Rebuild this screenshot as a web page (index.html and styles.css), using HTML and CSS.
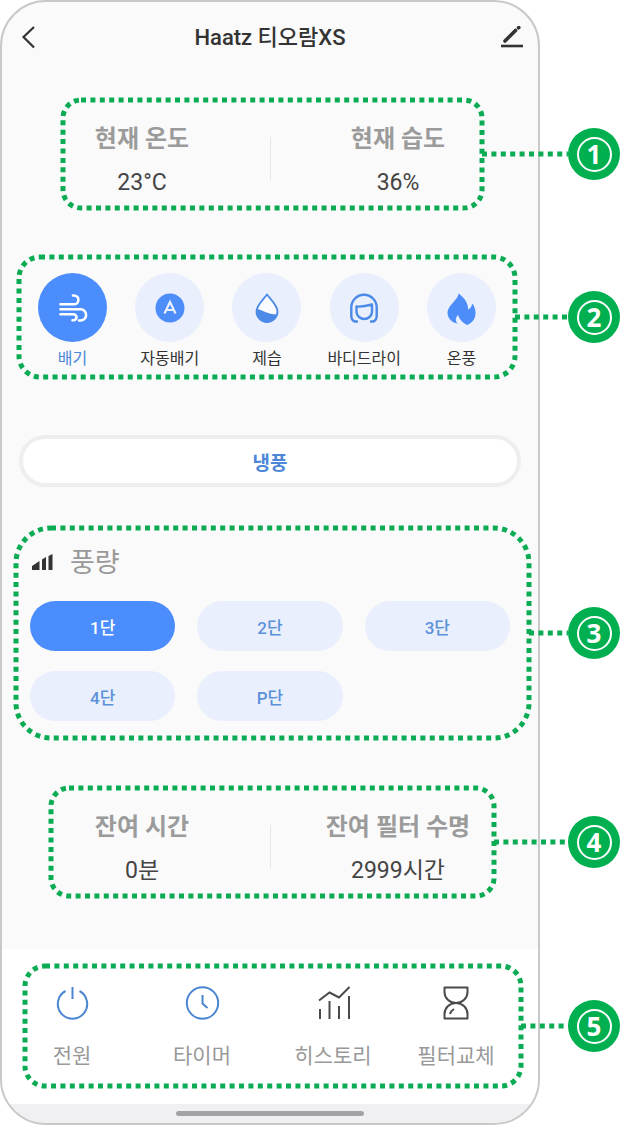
FILE: index.html
```html
<!DOCTYPE html>
<html lang="ko">
<head>
    <meta charset="UTF-8">
    <meta name="viewport" content="width=device-width, initial-scale=1.0">
    <title>Haatz 티오람XS</title>
    <link rel="stylesheet" href="styles.css">
</head>
<body>
    <div class="guide">
        <main class="phone">
            <header class="topbar">
                <button class="icon-btn" aria-label="뒤로">
                    <svg width="24" height="24" viewBox="0 0 24 24"><path d="M18 1 7.500 11 18 21.500" fill="none" stroke="#333" stroke-width="2.200"/></svg>
                </button>
                <h1>Haatz 티오람XS</h1>
                <button class="icon-btn" aria-label="편집">
                    <svg width="24" height="24" viewBox="0 0 24 24"><path d="M1 20h22" stroke="#333" stroke-width="2.600"/><path d="M5 15 15.500 4.500M18.500 1.800l.3-.3" stroke="#333" stroke-width="3.600" stroke-linecap="round"/></svg>
                </button>
            </header>

            <section class="block stats">
                <dl>
                    <div><dt>현재 온도</dt><dd>23°C</dd></div>
                    <div><dt>현재 습도</dt><dd>36%</dd></div>
                </dl>
                <div class="mark mark-status">
                    <svg class="frame"><rect x="3" y="3" rx="18"/></svg>
                    <div class="callout"><svg class="lead"><path d="M0 3h200"/></svg><span class="badge"><b>1</b></span></div>
                </div>
            </section>

            <section class="block modes">
                <div class="mode-list">
                    <button class="mode active" aria-pressed="true">
                        <span class="disc">
                            <svg width="34" height="34" viewBox="0 0 34 34" fill="none" stroke="#fff" stroke-width="2.600" stroke-linecap="round"><path d="M4.500 13.300h13.500a4.300 4.300 0 0 0 0-8.800h-1M4.500 18.300h20a5.600 5.600 0 0 1 0 11.200h-1.500M4.500 23.300h13a3 3 0 0 1 0 6h-1"/></svg>
                        </span>
                        배기
                    </button>
                    <button class="mode" aria-pressed="false">
                        <span class="disc">
                            <svg width="34" height="34" viewBox="0 0 34 34"><circle cx="17" cy="17" r="14.500" fill="#4c8dfa"/><path d="M11.500 22.500 17 11l5.500 11.500M13.500 19h7" fill="none" stroke="#e9effd" stroke-width="2.200"/></svg>
                        </span>
                        자동배기
                    </button>
                    <button class="mode" aria-pressed="false">
                        <span class="disc">
                            <svg width="34" height="34" viewBox="0 0 34 34"><path d="M17 3.500C13.500 8.500 6.500 14 6.500 20.500a10.500 10.500 0 0 0 21 0C27.500 14 20.500 8.500 17 3.500z" fill="#fafbff" stroke="#4b8ae6" stroke-width="1.800" stroke-linejoin="round"/><path d="M6.500 18c7 1 11 5.500 20.500 5.500a10.500 10.500 0 0 1-20.500-5.500z" fill="#4b8ae6"/></svg>
                        </span>
                        제습
                    </button>
                    <button class="mode" aria-pressed="false">
                        <span class="disc">
                            <svg width="34" height="34" viewBox="0 0 34 34" fill="none" stroke="#4b8ae6" stroke-width="2.400" stroke-linecap="round" stroke-linejoin="round"><path d="M10 30.500H8c-2.500-.5-3.700-3-3.700-6v-8a12.700 12.700 0 0 1 25.400 0v8c0 3-1.200 5.500-3.700 6h-2"/><path d="M9.500 15.500c5 .5 10-.5 15.500-2v7.500c0 4-4 7-7.700 7s-7.800-3-7.800-7z"/></svg>
                        </span>
                        바디드라이
                    </button>
                    <button class="mode" aria-pressed="false">
                        <span class="disc">
                            <svg width="34" height="34" viewBox="0 0 34 34"><path d="M14.500 2.500c0 6-11 12-11 19 0 5.500 4 10 10 11-2.500-3-2-6 .5-8.500 1.500 4 4 7.500 9 10 5.500-2 8.500-6.500 8.500-12 0-3.500-1-7-3.300-9.500-.5 3-1.500 5-4.200 6 .5-6.500-4-12-9.500-16z" fill="#4c8dfa"/></svg>
                        </span>
                        온풍
                    </button>
                </div>
                <div class="mark mark-modes">
                    <svg class="frame"><rect x="3" y="3" rx="21"/></svg>
                    <div class="callout"><svg class="lead"><path d="M0 3h200"/></svg><span class="badge"><b>2</b></span></div>
                </div>
            </section>

            <button class="cool">냉풍</button>

            <section class="block airflow">
                <h2>
                    <svg width="24" height="18" viewBox="0 0 24 18"><path d="M2 16v-4l7.500-5v9zM12 16V5.500l4-2.500v13zM18.500 16V2L22.500 0v16z" fill="#333"/></svg>
                    풍량
                </h2>
                <div class="levels">
                    <button class="level active" aria-pressed="true">1단</button>
                    <button class="level" aria-pressed="false">2단</button>
                    <button class="level" aria-pressed="false">3단</button>
                    <button class="level" aria-pressed="false">4단</button>
                    <button class="level" aria-pressed="false">P단</button>
                </div>
                <div class="mark mark-airflow">
                    <svg class="frame"><rect x="3" y="3" rx="35"/></svg>
                    <div class="callout"><svg class="lead"><path d="M0 3h200"/></svg><span class="badge"><b>3</b></span></div>
                </div>
            </section>

            <section class="block stats">
                <dl>
                    <div><dt>잔여 시간</dt><dd>0분</dd></div>
                    <div><dt>잔여 필터 수명</dt><dd>2999시간</dd></div>
                </dl>
                <div class="mark mark-remain">
                    <svg class="frame"><rect x="3" y="3" rx="18"/></svg>
                    <div class="callout"><svg class="lead"><path d="M0 3h200"/></svg><span class="badge"><b>4</b></span></div>
                </div>
            </section>

            <footer class="bottom">
                <div class="block tabs">
                    <nav class="tab-list">
                        <button class="tab">
                            <svg width="36" height="36" viewBox="0 0 36 36" fill="none" stroke="#4b86d2" stroke-width="2"><path d="M18.500 2v12M11.500 6a14.700 14.700 0 1 0 14 0"/></svg>
                            전원
                        </button>
                        <button class="tab">
                            <svg width="36" height="36" viewBox="0 0 36 36" fill="none" stroke="#4b86d2" stroke-width="2"><circle cx="18.500" cy="18" r="15.700"/><path d="M18.500 10v8.500l5 4.500"/></svg>
                            타이머
                        </button>
                        <button class="tab">
                            <svg width="36" height="36" viewBox="0 0 36 36" fill="none" stroke="#4a4a4a" stroke-width="2"><path d="M4 15.500 14.500 7.500l9.500 5L34.500 2M5 24v10M14.500 16v18M24 21v13M34 11v23"/></svg>
                            히스토리
                        </button>
                        <button class="tab">
                            <svg width="36" height="36" viewBox="0 0 36 36" fill="none" stroke="#4a4a4a" stroke-width="2" stroke-linejoin="round"><path d="M6.500 2.500h23V7c0 6-5 11-11.500 11S6.500 13 6.500 7zM6.500 33.500h23V29c0-6-5-11-11.500-11S6.500 23 6.500 29z"/><path d="M12 29c.5-2 1.500-3.500 4-5"/></svg>
                            필터교체
                        </button>
                    </nav>
                    <div class="mark mark-tabs">
                        <svg class="frame"><rect x="3" y="3" rx="20"/></svg>
                        <div class="callout"><svg class="lead"><path d="M0 3h200"/></svg><span class="badge"><b>5</b></span></div>
                    </div>
                </div>
                <div class="home"><span></span></div>
            </footer>
        </main>
    </div>
</body>
</html>
```
FILE: styles.css
```css
* {
    box-sizing: border-box;
}

body {
    margin: 0;
    background-color: #fff;
    color: #333;
    font-family: Roboto, "Noto Sans CJK KR", sans-serif;
}

button {
    border: none;
    padding: 0;
    background: none;
    font: inherit;
    color: inherit;
    cursor: pointer;
}

svg {
    display: block;
}

.guide {
    padding-right: 96px;
}

.phone {
    border: 2px solid #c9c9c9;
    border-radius: 46px;
    background-color: #fafafa;
}

.topbar {
    display: flex;
    align-items: center;
    justify-content: space-between;
    height: 71px;
    padding: 0 14px;
}

.topbar h1 {
    margin: 0;
    font-size: 22px;
    font-weight: 500;
    line-height: 30px;
}

.block {
    position: relative;
}

/* temperature / humidity and remaining time */
.stats {
    margin-top: 24px;
    padding: 26px 12px 13px;
}

.stats dl {
    display: grid;
    grid-template-columns: 1fr 1fr;
    margin: 0;
    text-align: center;
}

.stats dl > div + div {
    position: relative;
}

.stats dl > div + div::before {
    content: "";
    position: absolute;
    left: 0;
    top: 14px;
    bottom: 18px;
    width: 1px;
    background-color: #e6e6e6;
}

.stats dt {
    font-size: 24px;
    font-weight: 700;
    line-height: 32px;
    color: #9b9b9b;
}

.stats dd {
    margin: 13px 0 0;
    font-size: 23px;
    line-height: 30px;
    color: #444;
}

/* modes */
.modes {
    margin-top: 43px;
    padding: 19px 28px 9px 22px;
}

.mode-list {
    display: grid;
    grid-template-columns: repeat(5, 1fr);
}

.mode {
    display: flex;
    flex-direction: column;
    align-items: center;
    gap: 5px;
    font-size: 16px;
    line-height: 24px;
    white-space: nowrap;
}

.mode.active {
    color: #4b86d8;
}

.disc {
    display: flex;
    align-items: center;
    justify-content: center;
    width: 69px;
    height: 69px;
    border-radius: 50%;
    background-color: #e9effd;
}

.mode.active .disc {
    background-color: #4c8dfd;
}

.cool {
    display: block;
    width: calc(100% - 34px);
    height: 52px;
    margin: 55px 17px 0;
    border: 4px solid #eee;
    border-radius: 26px;
    background-color: #fff;
    font-size: 19px;
    font-weight: 700;
    color: #4b86d8;
}

/* airflow */
.airflow {
    margin-top: 38px;
    padding: 20px 28px 20px;
}

.airflow h2 {
    display: flex;
    align-items: center;
    gap: 16px;
    margin: 0 0 20px;
    font-size: 27px;
    font-weight: 400;
    line-height: 36px;
    color: #999;
}

.levels {
    display: grid;
    grid-template-columns: repeat(3, 1fr);
    gap: 20px 22px;
}

.level {
    height: 50px;
    border-radius: 25px;
    background-color: #e9effd;
    font-size: 17px;
    font-weight: 500;
    color: #5b91d8;
}

.level.active {
    background-color: #4c8dfd;
    color: #fff;
}

.airflow + .stats {
    margin-top: 44px;
}

/* bottom tabs, the strip under them holds the home bar */
.bottom {
    margin-top: 50px;
    padding-top: 14px;
    border-radius: 0 0 44px 44px;
    background: linear-gradient(to top, #f0f0f2 19px, #fff 19px);
}

.tabs {
    padding: 22px 25px 18px 5px;
}

.tab-list {
    display: grid;
    grid-template-columns: 130fr 130fr 132fr 114fr;
}

.tab {
    display: flex;
    flex-direction: column;
    align-items: center;
    gap: 20px;
    font-size: 21px;
    line-height: 30px;
    color: #999;
    white-space: nowrap;
}

.home {
    display: flex;
    justify-content: center;
    margin-top: 15px;
    padding: 7px 0;
}

.home span {
    width: 188px;
    height: 5px;
    border-radius: 3px;
    background-color: #a3a3a5;
}

/* numbered marks drawn over each block */
.mark {
    position: absolute;
    top: 0;
    bottom: 0;
    left: var(--left);
    right: var(--right);
    pointer-events: none;
}

.mark-status {
    --left: 58px;
    --right: 53px;
}

.mark-modes {
    --left: 14px;
    --right: 20px;
}

.mark-airflow {
    --left: 11px;
    --right: 6px;
}

.mark-remain {
    --left: 46px;
    --right: 41px;
}

.mark-tabs {
    --left: 20px;
    --right: 14px;
}

.frame {
    width: 100%;
    height: 100%;
}

.frame rect {
    width: calc(100% - 6px);
    height: calc(100% - 6px);
}

.frame rect,
.lead path {
    fill: none;
    stroke: #0aab52;
    stroke-width: 5;
    stroke-dasharray: 5 4.4;
}

.callout {
    position: absolute;
    top: 0;
    bottom: 0;
    left: calc(100% - 3px);
    right: calc(-82px - var(--right));
    display: flex;
    align-items: center;
}

.lead {
    flex: 1;
    min-width: 0;
    height: 6px;
}

.badge {
    display: flex;
    align-items: center;
    justify-content: center;
    width: 52px;
    height: 52px;
    border-radius: 50%;
    background-color: #00b050;
}

.badge b {
    width: 35px;
    height: 35px;
    border: 2px solid #fff;
    border-radius: 50%;
    font-family: "Noto Sans", sans-serif;
    font-size: 26px;
    line-height: 31px;
    text-align: center;
    color: #fff;
}
```
